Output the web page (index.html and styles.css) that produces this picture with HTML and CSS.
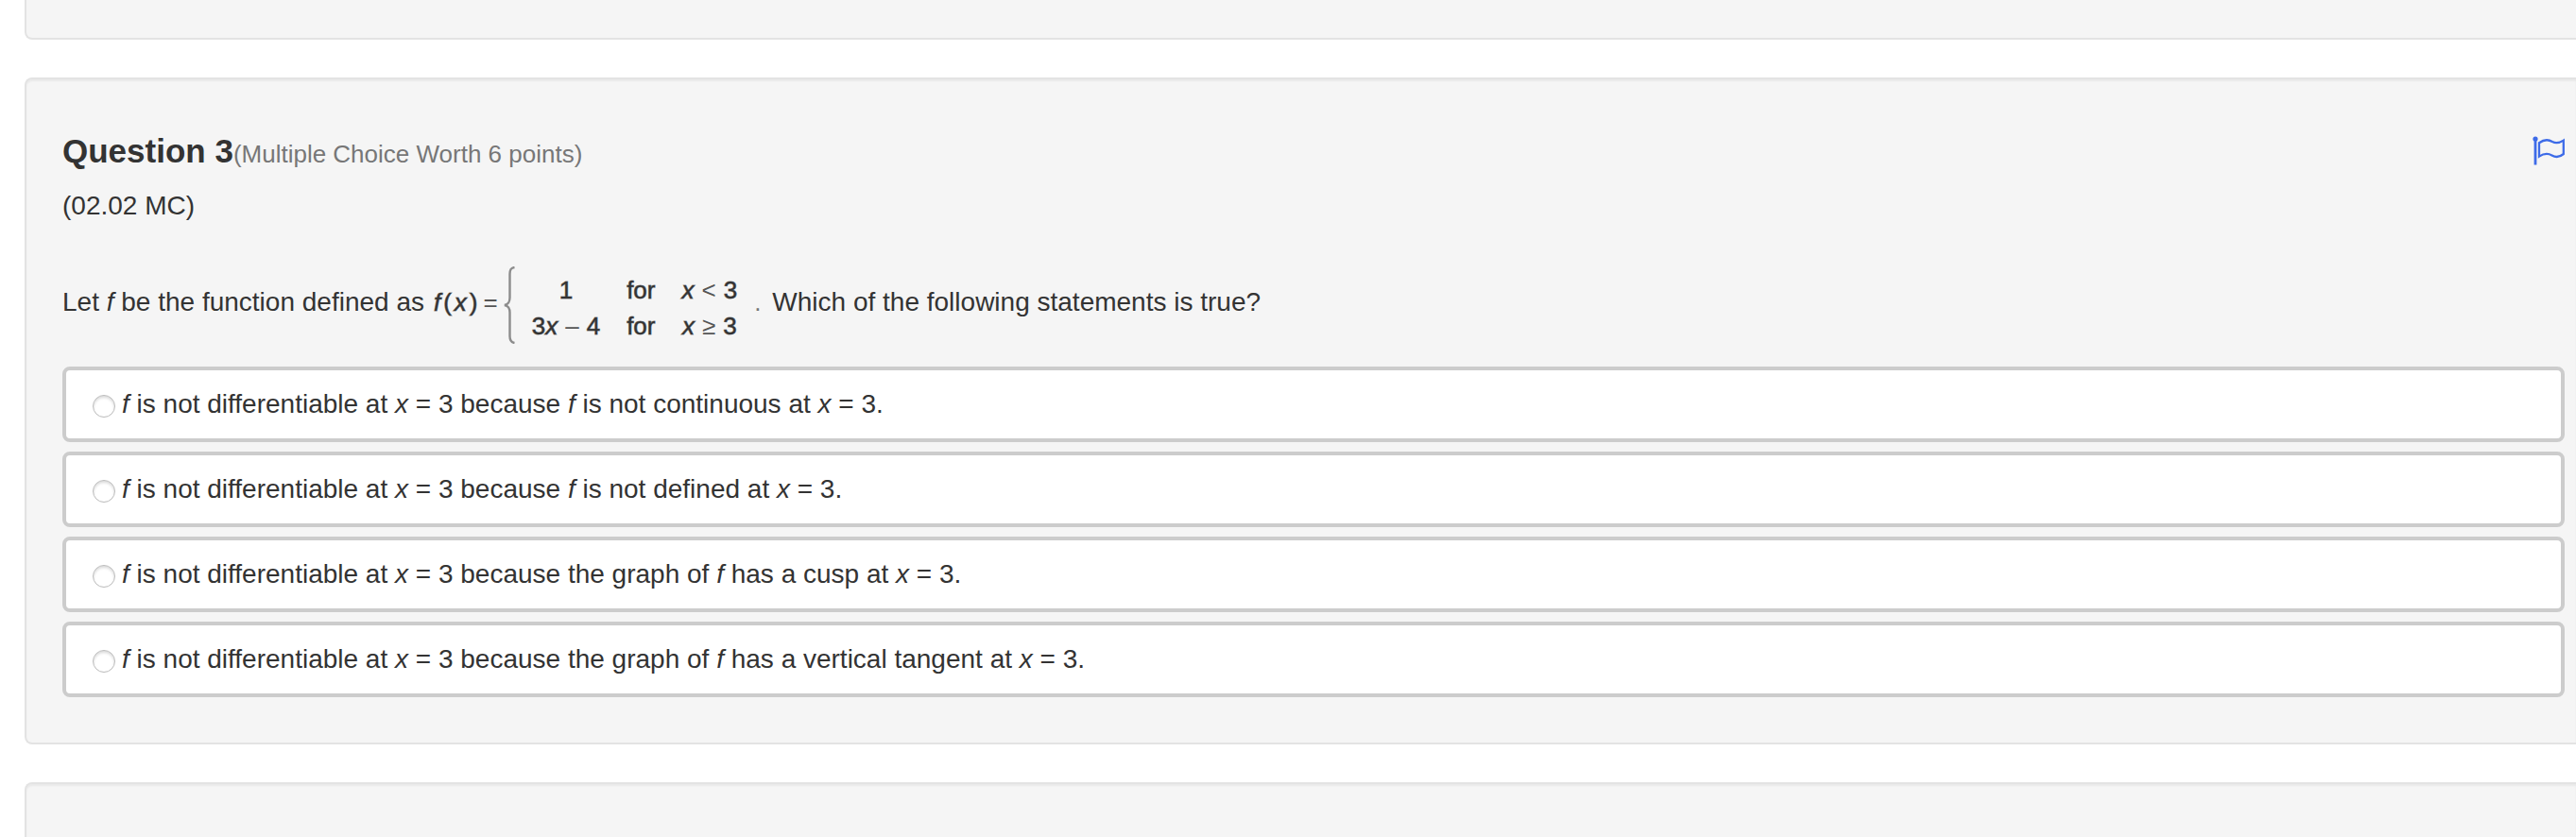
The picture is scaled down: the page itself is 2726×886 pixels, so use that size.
FILE: index.html
```
<!DOCTYPE html>
<html lang="en">
<head>
    <meta charset="UTF-8">
    <meta name="viewport" content="width=device-width, initial-scale=1.0">
    <title>Question 3</title>
    <link rel="stylesheet" href="styles.css">
</head>
<body>

<div class="card card-prev"></div>

<form class="card card-question">
  <div class="header">
    <h3 class="title">Question 3<small>(Multiple Choice Worth 6 points)</small></h3>
    <button type="button" class="flag" aria-label="Flag question">
      <svg width="34" height="32" viewBox="0 0 34 32" fill="none" stroke="#3d6be8" stroke-width="2.3">
        <circle cx="3" cy="3" r="2.6" fill="#3d6be8" stroke="none"/>
        <path d="M3 3V30.5" stroke-width="2.8"/>
        <path d="M7 7.2C12 3.6 17 3.6 21 6C25 8.2 28.5 7.4 32.8 4.6V19C28.5 22.6 24.5 22.8 20.5 20.4C16.5 18.2 12 18.4 7 21.6Z"/>
      </svg>
    </button>
  </div>

  <p class="code">(02.02 MC)</p>

  <div class="question" id="question">
    <span>Let <i>f</i> be the function defined as</span>
    <div class="formula">
      <span class="fx"><i>f</i><span>(</span><i>x</i><span>)</span></span>
      <span class="equals">=</span>
      <svg class="brace" width="12" height="82" viewBox="0 0 12 82" fill="none" stroke="#8c8c8c" stroke-width="2.4">
        <path d="M11.5 1C7.5 1.5 6.5 3.5 6.5 8V33C6.5 38 5 40 1 41C5 42 6.5 44 6.5 49V74C6.5 78 8 80.5 11.5 81"/>
      </svg>
      <div class="cases">
        <span>1</span>
        <span>for</span>
        <span class="cond"><i>x</i><span class="sign">&lt;</span><span>3</span></span>
        <span class="expr"><span>3<i>x</i></span><span class="sign">–</span><span>4</span></span>
        <span>for</span>
        <span class="cond"><i>x</i><span class="sign">≥</span><span>3</span></span>
      </div>
      <span class="dot">.</span>
    </div>
    <span>Which of the following statements is true?</span>
  </div>

  <div class="options" role="radiogroup" aria-labelledby="question">
    <label class="option">
      <input type="radio" name="answer" value="a">
      <span><i>f</i> is not differentiable at <i>x</i> = 3 because <i>f</i> is not continuous at <i>x</i> = 3.</span>
    </label>
    <label class="option">
      <input type="radio" name="answer" value="b">
      <span><i>f</i> is not differentiable at <i>x</i> = 3 because <i>f</i> is not defined at <i>x</i> = 3.</span>
    </label>
    <label class="option">
      <input type="radio" name="answer" value="c">
      <span><i>f</i> is not differentiable at <i>x</i> = 3 because the graph of <i>f</i> has a cusp at <i>x</i> = 3.</span>
    </label>
    <label class="option">
      <input type="radio" name="answer" value="d">
      <span><i>f</i> is not differentiable at <i>x</i> = 3 because the graph of <i>f</i> has a vertical tangent at <i>x</i> = 3.</span>
    </label>
  </div>
</form>

<div class="card card-next"></div>

</body>
</html>
```

FILE: styles.css
```
* {
  box-sizing: border-box;
}

body {
  display: flex;
  flex-direction: column;
  gap: 40px;
  min-height: 100vh;
  margin: 0;
  padding-left: 26px;
  font-family: "Liberation Sans", Arial, Helvetica, sans-serif;
  font-size: 28px;
  line-height: 40px;
  color: #333;
  background-color: #fff;
}

.card {
  background-color: #f5f5f5;
  border: 2px solid #e3e3e3;
  border-right: 0;
  border-radius: 8px 0 0 8px;
  box-shadow: inset 0 2px 2px rgba(0,0,0,0.05);
}

.card-prev {
  height: 42px;
  border-top: 0;
  border-radius: 0 0 0 8px;
  box-shadow: none;
}

.card-question {
  padding: 54px 12px 48px 38px;
}

.card-next {
  flex: 1;
  border-bottom: 0;
  border-radius: 8px 0 0 0;
}

/* header */
.header {
  display: flex;
  align-items: center;
  justify-content: space-between;
}

.title {
  margin: 0;
  font-size: 35px;
  line-height: 44px;
}

.title small {
  font-size: 26px;
  font-weight: normal;
  line-height: 26px;
  color: #777;
}

.flag {
  display: flex;
  padding: 0;
  border: 0;
  background: none;
  cursor: pointer;
}

.code {
  margin: 16px 0 38px;
}

/* question text with the piecewise function */
.question {
  display: flex;
  align-items: center;
  margin-bottom: 24px;
}

.formula {
  display: flex;
  align-items: center;
  margin: 0 12px 0 10px;
  font-size: 26px;
  line-height: 38px;
}

.fx {
  display: flex;
  gap: 3px;
  -webkit-text-stroke: 1px rgba(51,51,51,0.6);
}

.equals {
  margin: 0 6px;
  color: #555;
}

.brace {
  margin: 6px 18px 0 0;
}

.cases {
  display: grid;
  grid-template-columns: auto auto auto;
  column-gap: 28px;
  justify-items: center;
  margin-top: 12px;
  -webkit-text-stroke: 1px rgba(51,51,51,0.6);
}

.expr,
.cond {
  display: flex;
  gap: 8px;
}

.sign {
  color: #555;
  -webkit-text-stroke: 0;
}

.dot {
  margin-left: 18px;
  color: #777;
}

/* answers */
.options {
  display: flex;
  flex-direction: column;
  gap: 10px;
}

.option {
  display: flex;
  align-items: center;
  gap: 7px;
  padding: 16px 28px;
  border: 4px solid #ccc;
  border-radius: 8px;
  background-color: #fff;
  cursor: pointer;
}

.option input {
  appearance: none;
  flex: none;
  width: 24px;
  height: 24px;
  margin: 4px 0 0;
  border: 1px solid #bbb;
  border-radius: 50%;
  background-color: #fff;
  box-shadow: inset 0 2px 3px rgba(0,0,0,0.15);
}

.option input:checked {
  background-color: #4169e1;
}
```
